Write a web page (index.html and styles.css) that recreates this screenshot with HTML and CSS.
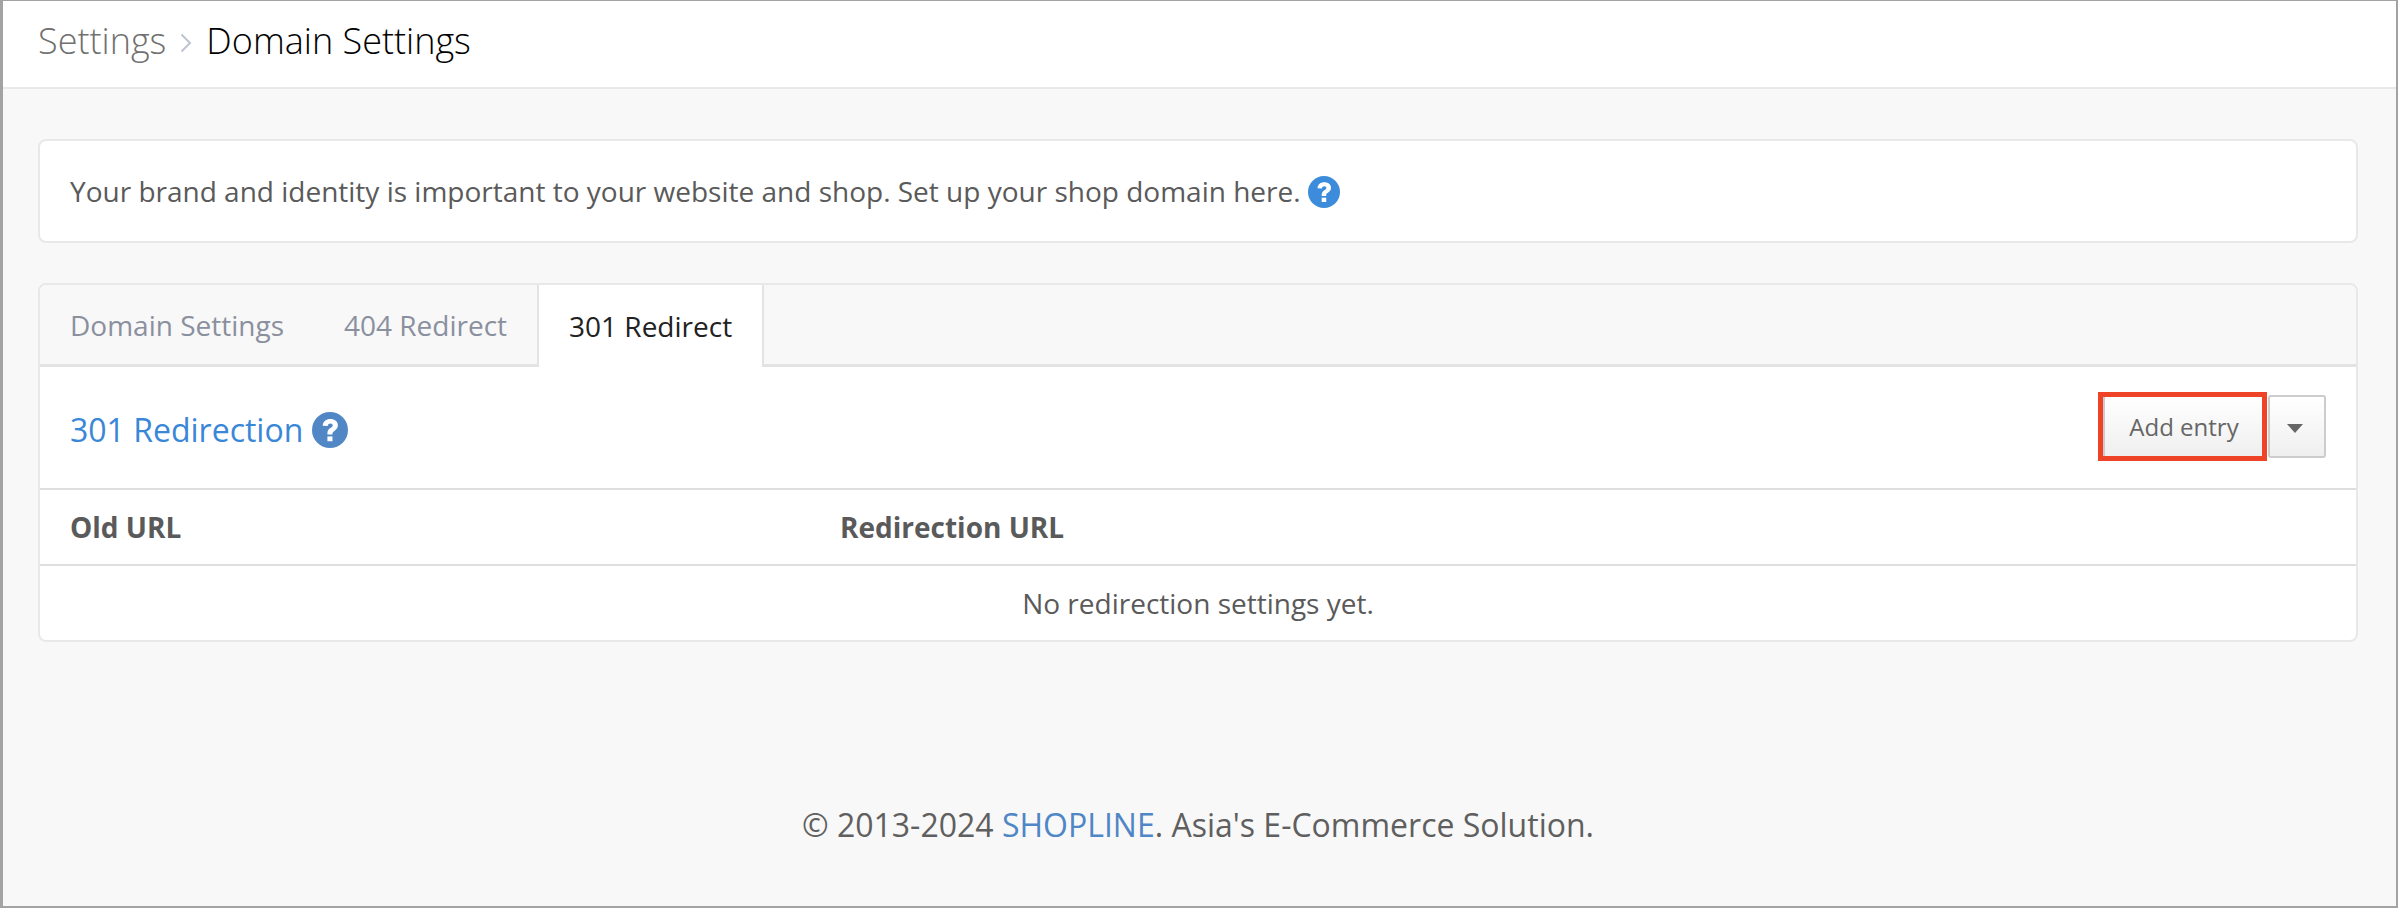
FILE: index.html
```html
<!DOCTYPE html>
<html lang="en">
<head>
<meta charset="utf-8">
<title>Domain Settings</title>
<link rel="stylesheet" href="styles.css">
</head>
<body>
<div class="frame">
  <header class="topbar">
    <span class="crumb">Settings</span>
    <svg class="chev" viewBox="0 0 12 20" width="12" height="20"><path d="M1.500 1.500 L10 10 L1.500 18.500" fill="none" stroke="#bfc4d0" stroke-width="2"/></svg>
    <span class="crumb-current">Domain Settings</span>
  </header>
  <main class="content">
    <section class="card intro">
      <span>Your brand and identity is important to your website and shop. Set up your shop domain here.</span>
      <svg class="help" viewBox="0 0 32 32" width="32" height="32"><circle cx="16" cy="16" r="16" fill="#3d8cdb"/><path d="M9.500 12.200c.3-3.800 3.100-5.900 6.800-5.900 3.800 0 6.700 2.200 6.700 5.500 0 2.500-1.300 3.800-3.100 5-1.300.8-1.700 1.300-1.700 2.600v.6h-4.500v-1.100c0-2.100.8-3.400 2.600-4.600 1.400-.9 2.100-1.400 2.100-2.300 0-1-.8-1.700-2.100-1.700-1.400 0-2.200.8-2.400 2.200z" fill="#fff"/><rect x="13.700" y="21.700" width="4.500" height="4.300" fill="#fff"/></svg>
    </section>
    <section class="card panel">
      <nav class="tabs">
        <a class="tab">Domain Settings</a>
        <a class="tab">404 Redirect</a>
        <a class="tab active">301 Redirect</a>
      </nav>
      <div class="panel-head">
        <h2 class="panel-title">301 Redirection</h2>
        <svg class="help-lg" viewBox="0 0 32 32" width="36" height="36"><circle cx="16" cy="16" r="16" fill="#5287c6"/><path d="M9.500 12.200c.3-3.800 3.100-5.900 6.800-5.900 3.800 0 6.700 2.200 6.700 5.500 0 2.500-1.300 3.800-3.100 5-1.300.8-1.700 1.300-1.700 2.600v.6h-4.500v-1.100c0-2.100.8-3.400 2.600-4.600 1.400-.9 2.100-1.400 2.100-2.300 0-1-.8-1.700-2.100-1.700-1.400 0-2.200.8-2.400 2.200z" fill="#fff"/><rect x="13.700" y="21.700" width="4.500" height="4.300" fill="#fff"/></svg>
        <div class="btn-group">
          <button class="btn btn-main">Add entry</button>
          <button class="btn btn-caret"><span class="caret"></span></button>
          <span class="highlight"></span>
        </div>
      </div>
      <div class="table-head">
        <div class="col-old">Old URL</div>
        <div class="col-new">Redirection URL</div>
      </div>
      <div class="table-empty">No redirection settings yet.</div>
    </section>
  </main>
  <footer class="foot">© 2013-2024 <a class="foot-link">SHOPLINE</a>. Asia's E-Commerce Solution.</footer>
</div>
</body>
</html>
```

FILE: styles.css
```css
* { box-sizing: border-box; }
html, body { margin: 0; height: 100%; }
body {
  font-family: "Open Sans", "Noto Sans", sans-serif;
  font-size: 28px;
  color: #5a5a5a;
  background: #f8f8f8;
}
.frame {
  height: 908px;
  border: 2px solid #a3a3a3;
  border-top-width: 1px;
  border-left-width: 3px;
  display: flex;
  flex-direction: column;
  background: #f8f8f8;
}
.topbar {
  height: 88px;
  background: #fff;
  border-bottom: 2px solid #e8e8e8;
  padding: 0 0 7px 35px;
  display: flex;
  align-items: center;
  font-size: 36px;
  font-weight: 300;
}
.crumb { color: #707070; }
.chev { margin: 4px 14px 0; }
.crumb-current { color: #000; }
.content {
  padding: 50px 38px 0 35px;
  flex: 1;
}
.card {
  background: #fff;
  border: 2px solid #e8e8e8;
  border-radius: 8px;
}
.intro {
  height: 104px;
  display: flex;
  align-items: center;
  padding-left: 30px;
  gap: 7px;
  margin-bottom: 40px;
}
.help { flex: none; margin-top: 2px; }
.panel {
  overflow: hidden;
  height: 359px;
  display: flex;
  flex-direction: column;
}
.tabs {
  height: 82px;
  flex: none;
  background: #f8f8f8;
  border-bottom: 3px solid #e3e3e3;
  display: flex;
  padding-left: 30px;
}
.tab {
  color: #8b909f;
  display: flex;
  align-items: center;
  margin-right: 60px;
}
.tab.active {
  margin: 0 0 -3px -30px;
  padding: 0 30px;
  background: #fff;
  color: #222;
  border-left: 2px solid #e3e3e3;
  border-right: 2px solid #e3e3e3;
}
.panel-head {
  height: 123px;
  flex: none;
  padding: 0 30px;
  display: flex;
  align-items: center;
  border-bottom: 2px solid #dedede;
}
.panel-title {
  margin: 3px 9px 0 0;
  font-size: 32px;
  font-weight: 400;
  color: #3a87d8;
}
.help-lg { flex: none; margin-top: 4px; }
.btn-group {
  margin: 0 0 2px auto;
  display: flex;
  position: relative;
}
.btn {
  height: 63px;
  font: inherit;
  font-size: 24px;
  color: #666;
  background: linear-gradient(#fff, #efefef);
  border: 2px solid #ccc;
  border-radius: 3px;
  padding: 0;
}
.btn-main { width: 162px; margin-right: 3px; }
.btn-caret {
  width: 58px;
  padding: 3px 5px 0 0;
  display: flex;
  align-items: center;
  justify-content: center;
}
.caret {
  width: 0; height: 0;
  border-left: 8px solid transparent;
  border-right: 8px solid transparent;
  border-top: 9px solid #666;
}
.highlight {
  position: absolute;
  left: -5px;
  top: -3px;
  width: 169px;
  height: 69px;
  border: 5px solid #ee4326;
}
.table-head {
  height: 76px;
  flex: none;
  display: flex;
  align-items: center;
  padding-left: 30px;
  border-bottom: 2px solid #dedede;
  font-weight: 700;
}
.col-old { width: 770px; }
.table-empty {
  flex: 1;
  display: flex;
  align-items: center;
  justify-content: center;
}
.foot {
  text-align: center;
  font-size: 32px;
  color: #5f5f5f;
  padding: 0 3px 60px 0;
}
.foot-link { color: #4f86c6; }
```
